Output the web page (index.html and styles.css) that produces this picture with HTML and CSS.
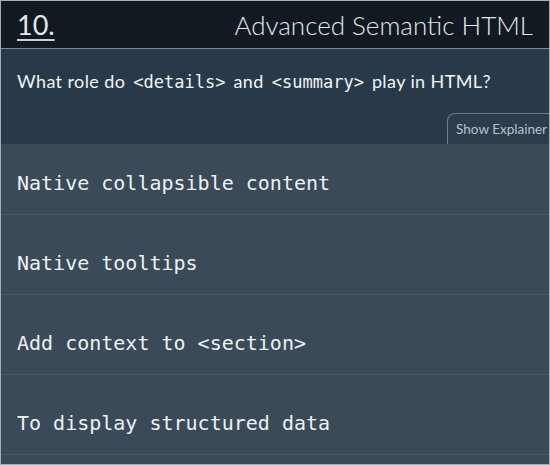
FILE: index.html
```html
<!DOCTYPE html>
<html lang="en">
<head>
<meta charset="utf-8">
<title>Quiz</title>
<link rel="stylesheet" href="styles.css">
</head>
<body>
<div class="card">
  <header class="head">
    <a class="num" href="#">10.</a>
    <h1 class="title">Advanced Semantic HTML</h1>
  </header>
  <section class="question">
    <p class="qtext">What role do <code>&lt;details&gt;</code> and <code>&lt;summary&gt;</code> play in HTML?</p>
    <button class="tab">Show Explainer</button>
  </section>
  <ul class="answers">
    <li class="answer first">Native collapsible content</li>
    <li class="answer">Native tooltips</li>
    <li class="answer">Add context to &lt;section&gt;</li>
    <li class="answer">To display structured data</li>
  </ul>
</div>
</body>
</html>
```

FILE: styles.css
```css
html, body {
  margin: 0;
  padding: 0;
  background: #3a4a58;
}
.card {
  width: 550px;
  height: 465px;
  box-sizing: border-box;
  border: 1px solid #a3adb6;
  overflow: hidden;
  display: flex;
  flex-direction: column;
  background: #3a4a58;
  font-family: Lato, "Open Sans", sans-serif;
}
.head {
  height: 47px;
  flex: none;
  background: #121a21;
  border-bottom: 1px solid #7f8c97;
  display: flex;
  align-items: center;
  justify-content: space-between;
  padding: 0 16px;
}
.num {
  color: #e4e8eb;
  font-size: 27px;
  font-weight: 400;
  text-decoration: underline;
  text-decoration-thickness: 2px;
  text-underline-offset: 4px;
  text-decoration-color: #c9d0d6;
}
.title {
  margin: 0;
  color: #e4e8eb;
  font-size: 26px;
  font-weight: 300;
}
.question {
  height: 95px;
  flex: none;
  background: #283a49;
  display: flex;
  flex-direction: column;
}
.qtext {
  margin: 22px 0 0;
  padding: 0 16px;
  color: #f2f4f6;
  font-size: 18px;
  line-height: 20px;
  letter-spacing: 0.4px;
}
.qtext code {
  font-family: "DejaVu Sans Mono", monospace;
  font-size: 17px;
  letter-spacing: 0;
  padding: 0 3px;
}
.tab {
  margin-top: auto;
  align-self: flex-end;
  margin-right: -18px;
  height: 31px;
  padding: 0 19px 0 8px;
  background: #2b3d4c;
  border: 1px solid #6c7c89;
  border-bottom: none;
  border-radius: 8px 8px 0 0;
  color: #b8c2ca;
  font-family: Lato, "Open Sans", sans-serif;
  font-size: 13.5px;
}
.answers {
  list-style: none;
  margin: 0;
  padding: 0;
  flex: 1;
}
.answer {
  padding: 36px 16px 19px;
  line-height: 24px;
  border-bottom: 1px solid #4b5b68;
  color: #eef1f3;
  font-family: "DejaVu Sans Mono", monospace;
  font-size: 20px;
}
.answer.first {
  padding-top: 27px;
}
```
